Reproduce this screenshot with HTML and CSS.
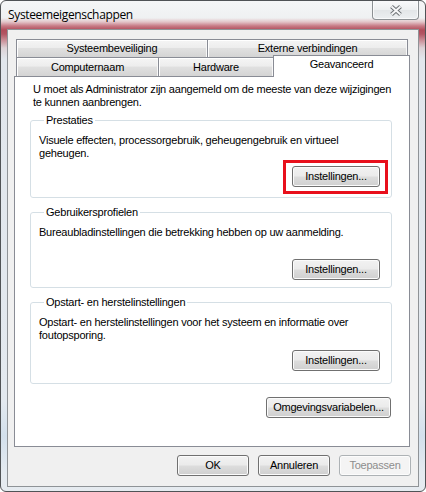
FILE: index.html
```html
<!DOCTYPE html>
<html lang="nl">
<head>
<meta charset="utf-8">
<title>Systeemeigenschappen</title>
<link rel="stylesheet" href="styles.css">
</head>
<body>
<div class="window">
  <div class="titlebar">
    <span class="title">Systeemeigenschappen</span>
    <button class="close" aria-label="Sluiten">
      <svg width="14" height="11" viewBox="0 0 14 11" aria-hidden="true">
        <g fill="none" stroke-linecap="butt">
          <path d="M2.5 1.5 L11.5 9.5 M11.5 1.5 L2.5 9.5" stroke="#6f7377" stroke-width="4"/>
          <path d="M2.5 1.5 L11.5 9.5 M11.5 1.5 L2.5 9.5" stroke="#f6f7f8" stroke-width="2"/>
        </g>
      </svg>
    </button>
  </div>
  <div class="client">
    <div class="tabs">
      <div class="tabrow tabrow-back">
        <div class="tab tab-protect">Systeembeveiliging</div>
        <div class="tab tab-remote">Externe verbindingen</div>
      </div>
      <div class="tabrow tabrow-front">
        <div class="tab tab-name">Computernaam</div>
        <div class="tab tab-hw">Hardware</div>
        <div class="tab tab-adv selected">Geavanceerd</div>
      </div>
    </div>
    <div class="panel">
      <p class="intro">U moet als Administrator zijn aangemeld om de meeste van deze wijzigingen<br>te kunnen aanbrengen.</p>

      <fieldset class="group group-perf">
        <legend class="group-title">Prestaties</legend>
        <p class="group-text">Visuele effecten, processorgebruik, geheugengebruik en virtueel<br>geheugen.</p>
        <div class="actions">
          <span class="marked">
            <button class="btn btn-settings">Instellingen...</button>
            <span class="marker"></span>
          </span>
        </div>
      </fieldset>

      <fieldset class="group group-profiles">
        <legend class="group-title">Gebruikersprofielen</legend>
        <p class="group-text">Bureaubladinstellingen die betrekking hebben op uw aanmelding.</p>
        <div class="actions">
          <button class="btn btn-settings">Instellingen...</button>
        </div>
      </fieldset>

      <fieldset class="group group-startup">
        <legend class="group-title">Opstart- en herstelinstellingen</legend>
        <p class="group-text">Opstart- en herstelinstellingen voor het systeem en informatie over<br>foutopsporing.</p>
        <div class="actions">
          <button class="btn btn-settings">Instellingen...</button>
        </div>
      </fieldset>

      <div class="env-row">
        <button class="btn btn-env">Omgevingsvariabelen...</button>
      </div>
    </div>
    <div class="footer">
      <button class="btn btn-dialog">OK</button>
      <button class="btn btn-dialog">Annuleren</button>
      <button class="btn btn-dialog" disabled>Toepassen</button>
    </div>
  </div>
</div>
</body>
</html>
```

FILE: styles.css
```css
html, body {
  margin: 0;
  padding: 0;
  background: #ffffff;
}

body {
  font-family: "Liberation Sans", Arial, sans-serif;
  font-size: 11px;
  letter-spacing: -0.22px;
  color: #000000;
}

.window {
  width: 426px;
  height: 492px;
  box-sizing: border-box;
  border: 1px solid #505356;
  border-radius: 6px;
  display: flex;
  flex-direction: column;
  overflow: hidden;
  background: linear-gradient(180deg,
    #f5f6f7 0px,
    #eff1f2 17px,
    #e2c4c8 21px,
    #c77a85 25px,
    #b04c5a 29px,
    #b25563 33px,
    #c98c95 39px,
    #dcd2d6 47px,
    #e1e6ec 58px,
    #e3e9ef 400px,
    #d3e0ec 435px,
    #e4eaf0 470px,
    #e6ebf0 492px);
}

.titlebar {
  height: 28px;
  flex: none;
  display: flex;
  align-items: flex-start;
  padding: 0 6px 0 7px;
}

.title {
  font-family: "Open Sans", "Noto Sans", sans-serif;
  font-size: 12px;
  letter-spacing: -0.35px;
  line-height: 16px;
  margin-top: 6px;
  color: #000000;
}

.close {
  margin-left: auto;
  margin-top: -1px;
  width: 47px;
  height: 20px;
  box-sizing: border-box;
  padding: 2px 0 0 0;
  border: 1px solid #8c9093;
  border-top: none;
  border-radius: 0 0 4px 4px;
  background: linear-gradient(180deg, #fbfbfc 0%, #eef0f1 50%, #e2e5e7 51%, #eceff1 100%);
  box-shadow: inset 0 0 0 1px rgba(255, 255, 255, 0.7);
  display: flex;
  align-items: center;
  justify-content: center;
}

.close svg {
  display: block;
}

.client {
  flex: none;
  height: 458px;
  box-sizing: border-box;
  margin: 0 6px;
  border: 1px solid #8f9397;
  background: #f0f0f0;
  padding: 9px 7px 0 6px;
}

/* Tabs */
.tabs {
  padding-left: 2px;
}

.tabrow {
  display: flex;
}

.tabrow-back {
  height: 18px;
}

.tabrow-front {
  height: 19px;
  align-items: flex-end;
}

.tab {
  box-sizing: border-box;
  border: 1px solid #898c95;
  border-bottom: none;
  text-align: center;
  white-space: nowrap;
  background: linear-gradient(180deg, #f5f5f5 0%, #ededed 45%, #e0e0e0 50%, #d4d4d4 100%);
  box-shadow: inset 1px 1px 0 #ffffff, inset -1px 0 0 #f8f8f8;
}

.tabrow-back .tab {
  height: 18px;
  line-height: 17px;
}

.tabrow-front .tab {
  height: 19px;
  line-height: 18px;
}

.tab + .tab {
  margin-left: -1px;
}

.tab-protect { width: 192px; }
.tab-remote  { width: 201px; }
.tab-name    { width: 143px; }
.tab-hw      { width: 116px; }

.tabrow-front .tab-adv {
  width: 137px;
  height: 22px;
  margin-bottom: -1px;
  padding-top: 2px;
  line-height: 13px;
  background: #ffffff;
  box-shadow: none;
  position: relative;
  z-index: 1;
}

/* Panel */
.panel {
  width: 396px;
  height: 371px;
  box-sizing: border-box;
  border: 1px solid #898c95;
  background: #ffffff;
  padding: 6px 17px 0 15px;
  display: flex;
  flex-direction: column;
}

.intro {
  margin: 0 0 0 3px;
  line-height: 13px;
  white-space: nowrap;
}

.group {
  margin: 0;
  border: 1px solid #d5dfe5;
  border-radius: 3px;
  padding: 7px 11px 10px 8px;
  min-width: 0;
}

.group-title {
  margin-left: 5px;
  padding: 0 2px;
  line-height: 13px;
  color: #000000;
}

.group-text {
  margin: 0;
  min-height: 26px;
  line-height: 13px;
  white-space: nowrap;
}

.actions {
  display: flex;
  justify-content: flex-end;
}

.group-perf {
  margin-top: 5px;
}
.group-perf .actions {
  margin-top: 6px;
}

.group-profiles {
  margin-top: 8px;
  padding-bottom: 7px;
}
.group-profiles .actions {
  margin-top: 7px;
}

.group-startup {
  margin-top: 8px;
  padding-bottom: 12px;
}
.group-startup .actions {
  margin-top: 8px;
}

.env-row {
  display: flex;
  justify-content: flex-end;
  margin-top: 13px;
  padding-right: 1px;
}

/* Red annotation box over the first settings button */
.marked {
  position: relative;
  display: flex;
}

.marker {
  position: absolute;
  top: -6px;
  right: -8px;
  bottom: -7px;
  left: -9px;
  border: 3px solid #e8101c;
  pointer-events: none;
}

/* Buttons */
.btn {
  font-family: "Liberation Sans", Arial, sans-serif;
  font-size: 11px;
  letter-spacing: -0.22px;
  color: #000000;
  height: 21px;
  box-sizing: border-box;
  line-height: 19px;
  padding: 0;
  margin: 0;
  border: 1px solid #707070;
  border-radius: 3px;
  background: linear-gradient(180deg, #f2f2f2 0%, #ebebeb 48%, #dddddd 52%, #cfcfcf 100%);
  box-shadow: inset 0 0 0 1px #fbfbfb;
  text-align: center;
  white-space: nowrap;
}

.btn:disabled {
  color: #8d8d8d;
  border-color: #adb2b5;
  background: #f4f4f4;
  box-shadow: inset 0 0 0 1px #fcfcfc;
}

.btn-settings {
  width: 88px;
}

.btn-env {
  width: 125px;
}

.footer {
  display: flex;
  justify-content: flex-end;
  gap: 9px;
  margin-top: 8px;
}

.btn-dialog {
  width: 72px;
}
```
